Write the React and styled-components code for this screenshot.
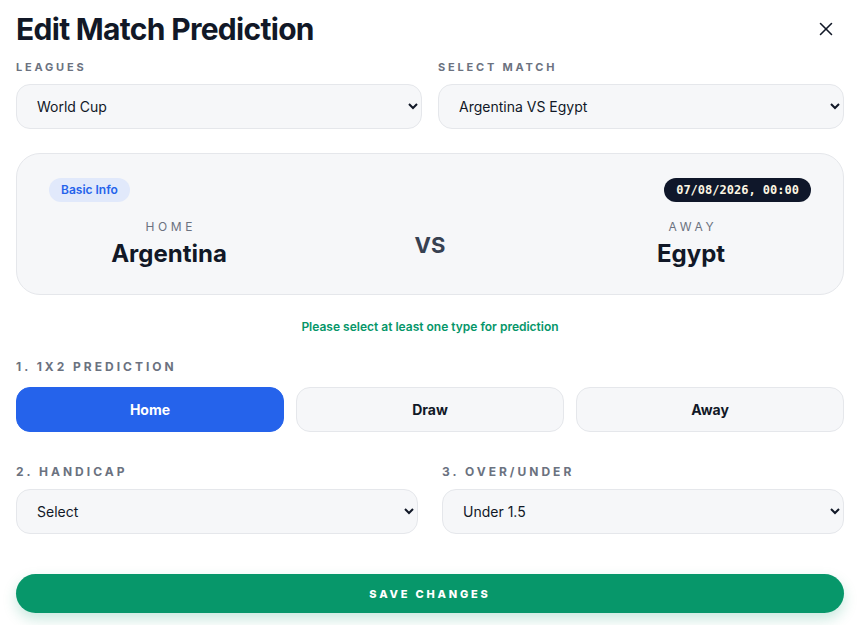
import styled, { createGlobalStyle } from "styled-components";
import { X } from "lucide-react";

const GlobalStyle = createGlobalStyle`
    body {
        margin: 0;
        background: #ffffff;
        font-family: Inter, "Noto Sans", sans-serif;
        color: #111827;
    }
`;

const Modal = styled.div`
    padding: 11px 17px 20px 16px;
    display: flex;
    flex-direction: column;
`;

const Header = styled.div`
    display: flex;
    justify-content: space-between;
    align-items: center;
    height: 36px;
`;

const Title = styled.h1`
    margin: 0;
    font-size: 30px;
    line-height: 36px;
    font-weight: 700;
    letter-spacing: -0.7px;
    color: #111827;
`;

const CloseButton = styled.button`
    display: flex;
    align-items: center;
    justify-content: center;
    border: none;
    background: none;
    padding: 0;
    margin-right: 7px;
    color: #111827;
    cursor: pointer;
`;

const FieldRow = styled.div`
    display: grid;
    grid-template-columns: 1fr 1fr;
    column-gap: ${(p) => p.$gap || 16}px;
    margin-top: ${(p) => p.$top || 0}px;
`;

const Field = styled.div`
    display: flex;
    flex-direction: column;
`;

const Label = styled.div`
    font-size: ${(p) => p.$size || 11}px;
    line-height: 16px;
    font-weight: 700;
    letter-spacing: ${(p) => (p.$size ? 3 : 2.8)}px;
    text-transform: uppercase;
    color: #6b7280;
    margin-bottom: ${(p) => p.$below || 9}px;
`;

const Select = styled.select`
    height: 45px;
    width: 100%;
    border: 1px solid #e5e7eb;
    border-radius: 14px;
    background: #f6f7f9;
    padding: 0 8px 0 16px;
    font-family: Inter, "Noto Sans", sans-serif;
    font-size: 14px;
    color: #111827;
    outline: none;
`;

const Card = styled.div`
    margin-top: 24px;
    border: 1px solid #e5e7eb;
    border-radius: 24px;
    background: #f6f7f9;
    padding: 24px 32px 24px;
    display: flex;
    flex-direction: column;
`;

const BadgeRow = styled.div`
    display: flex;
    justify-content: space-between;
    align-items: center;
`;

const InfoBadge = styled.span`
    background: #e1e9fb;
    color: #2563eb;
    font-size: 12px;
    font-weight: 600;
    line-height: 24px;
    padding: 0 12px;
    border-radius: 12px;
`;

const DateBadge = styled.span`
    background: #0f172a;
    color: #fdf6e3;
    font-family: "DejaVu Sans Mono", "Liberation Mono", monospace;
    font-size: 12px;
    font-weight: 700;
    line-height: 24px;
    padding: 0 12px;
    border-radius: 12px;
`;

const Teams = styled.div`
    display: grid;
    grid-template-columns: 240px 1fr 240px;
    align-items: center;
    margin-top: 17px;
`;

const Team = styled.div`
    display: flex;
    flex-direction: column;
    align-items: center;
`;

const Side = styled.div`
    font-size: 12px;
    line-height: 16px;
    letter-spacing: 3.6px;
    color: #6b7280;
    text-transform: uppercase;
    margin-right: -3.6px;
`;

const TeamName = styled.div`
    margin-top: 3px;
    font-size: 24px;
    line-height: 32px;
    font-weight: 700;
    color: #111827;
`;

const Versus = styled.div`
    text-align: center;
    font-size: 22px;
    font-weight: 700;
    color: #374151;
`;

const Notice = styled.div`
    margin-top: 24px;
    text-align: center;
    font-size: 12px;
    line-height: 16px;
    font-weight: 600;
    color: #059669;
`;

const Section = styled.div`
    margin-top: ${(p) => p.$top}px;
`;

const ChoiceRow = styled.div`
    display: grid;
    grid-template-columns: repeat(3, 1fr);
    gap: 12px;
`;

const Choice = styled.button`
    height: 45px;
    border-radius: 14px;
    border: 1px solid ${(p) => (p.$active ? "#2563eb" : "#e5e7eb")};
    background: ${(p) => (p.$active ? "#2563eb" : "#f6f7f9")};
    color: ${(p) => (p.$active ? "#ffffff" : "#111827")};
    font-family: Inter, "Noto Sans", sans-serif;
    font-size: 14px;
    font-weight: 700;
    cursor: pointer;
`;

const SaveButton = styled.button`
    margin-top: 40px;
    height: 39px;
    border: none;
    border-radius: 20px;
    background: #07976a;
    color: #ffffff;
    font-family: Inter, "Noto Sans", sans-serif;
    font-size: 11px;
    font-weight: 800;
    letter-spacing: 2.8px;
    box-shadow: 0 6px 14px rgba(5, 150, 105, 0.22);
    cursor: pointer;
`;

function App() {
    return (
        <>
            <GlobalStyle />
            <Modal>
                <Header>
                    <Title>Edit Match Prediction</Title>
                    <CloseButton aria-label="Close">
                        <X size={22} strokeWidth={1.7} />
                    </CloseButton>
                </Header>

                <FieldRow $top={12}>
                    <Field>
                        <Label>Leagues</Label>
                        <Select defaultValue="wc">
                            <option value="wc">World Cup</option>
                        </Select>
                    </Field>
                    <Field>
                        <Label>Select Match</Label>
                        <Select defaultValue="arg-egy">
                            <option value="arg-egy">Argentina VS Egypt</option>
                        </Select>
                    </Field>
                </FieldRow>

                <Card>
                    <BadgeRow>
                        <InfoBadge>Basic Info</InfoBadge>
                        <DateBadge>07/08/2026, 00:00</DateBadge>
                    </BadgeRow>
                    <Teams>
                        <Team>
                            <Side>Home</Side>
                            <TeamName>Argentina</TeamName>
                        </Team>
                        <Versus>VS</Versus>
                        <Team>
                            <Side>Away</Side>
                            <TeamName>Egypt</TeamName>
                        </Team>
                    </Teams>
                </Card>

                <Notice>Please select at least one type for prediction</Notice>

                <Section $top={24}>
                    <Label $size={12} $below={12}>1. 1X2 Prediction</Label>
                    <ChoiceRow>
                        <Choice $active>Home</Choice>
                        <Choice>Draw</Choice>
                        <Choice>Away</Choice>
                    </ChoiceRow>
                </Section>

                <FieldRow $top={32} $gap={24}>
                    <Field>
                        <Label $size={12}>2. Handicap</Label>
                        <Select defaultValue="">
                            <option value="">Select</option>
                        </Select>
                    </Field>
                    <Field>
                        <Label $size={12}>3. Over/Under</Label>
                        <Select defaultValue="u15">
                            <option value="u15">Under 1.5</option>
                        </Select>
                    </Field>
                </FieldRow>

                <SaveButton>SAVE CHANGES</SaveButton>
            </Modal>
        </>
    );
}

export default App;
